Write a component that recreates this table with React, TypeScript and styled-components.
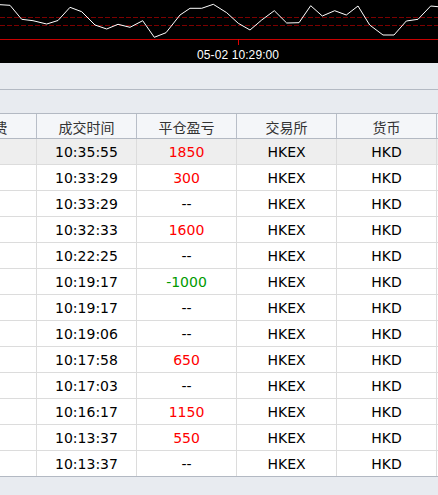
import React from "react";
import styled, { createGlobalStyle } from "styled-components";

const Global = createGlobalStyle`
  html, body { margin: 0; padding: 0; background: #e8ebf0; }
  body { width: 438px; height: 495px; overflow: hidden; font-family: "DejaVu Sans", Verdana, sans-serif; }
`;

const Page = styled.div`
  width: 438px;
  height: 495px;
  display: flex;
  flex-direction: column;
  overflow: hidden;
`;

const Chart = styled.div`
  background: #000;
  height: 63px;
  display: flex;
  flex-direction: column;
  flex: none;
`;

const ChartSvg = styled.svg`
  display: block;
  width: 438px;
  height: 45px;
`;

const AxisLabelRow = styled.div`
  height: 18px;
  display: flex;
  align-items: center;
  padding-left: 197px;
`;

const AxisLabel = styled.span`
  color: #fff;
  font-family: "Liberation Sans", Arial, sans-serif;
  font-size: 12px;
  letter-spacing: 0.1px;
  line-height: 1;
  margin-top: 1px;
`;

const ToolBar = styled.div<{ $h: number }>`
  height: ${(p) => p.$h}px;
  flex: none;
  background: #e8ebf0;
  border-bottom: 1px solid #b3b9c3;
`;

const TableViewport = styled.div`
  flex: none;
  overflow: hidden;
  background: #fff;
  border-bottom: 1px solid #b3b9c3;
`;

const TableInner = styled.div`
  margin-left: -63px;
  width: 700px;
`;

const COLS = "100px 100px 100px 100px 100px 200px";

const HeaderRow = styled.div`
  display: grid;
  grid-template-columns: ${COLS};
  height: 24px;
  background: #f4f6f9;
  border-bottom: 1px solid #b3b9c3;
`;

const HeadCell = styled.div`
  display: flex;
  align-items: center;
  justify-content: center;
  border-right: 1px solid #b8bec8;
  color: #333;
  font-family: "Noto Sans CJK SC", sans-serif;
  font-size: 14px;
  line-height: 1;
  padding-top: 1px;
`;

const Row = styled.div<{ $selected?: boolean }>`
  display: grid;
  grid-template-columns: ${COLS};
  height: 25px;
  background: ${(p) => (p.$selected ? "#eeeeee" : "#ffffff")};
  border-bottom: 1px solid #dcdcdc;
  &:last-child { border-bottom: none; }
`;

const Cell = styled.div<{ $tone?: "red" | "green" | "black" }>`
  display: flex;
  align-items: center;
  justify-content: center;
  border-right: 1px solid #dcdcdc;
  font-family: "DejaVu Sans", Verdana, sans-serif;
  font-size: 14px;
  line-height: 1;
  padding-top: 1px;
  color: ${(p) => (p.$tone === "red" ? "#ff0000" : p.$tone === "green" ? "#009a00" : "#000")};
`;

const Footer = styled.div`
  flex: 1;
  background: #e8ebf0;
`;

const linePts: [number, number][] = [
  [0, 4.7], [10, 5.3], [21.7, 19.3], [33, 20.7], [46.7, 24], [58, 20.5], [70, 7.3], [81.7, 11.7],
  [95, 25], [106.7, 29], [118, 24.3], [130, 27.3], [142.7, 20.7], [154.3, 37.3], [166, 32.7],
  [180, 15], [190, 8.3], [201.7, 8.3], [213.3, 4.3], [226.7, 12.7], [238.3, 23.3], [250, 30],
  [261.7, 20], [274.3, 10.7], [286.7, 23], [299, 22.7], [310.7, 5.7], [322.3, 16], [334.7, 10.7],
  [346.3, 15], [358, 6], [369.7, 25], [383, 35], [394, 35], [406.3, 21], [418, 19.3], [430.7, 6], [438, 6.7],
];

type Tone = "red" | "green" | "black";
const rows: { time: string; pnl: string; tone: Tone }[] = [
  { time: "10:35:55", pnl: "1850", tone: "red" },
  { time: "10:33:29", pnl: "300", tone: "red" },
  { time: "10:33:29", pnl: "--", tone: "black" },
  { time: "10:32:33", pnl: "1600", tone: "red" },
  { time: "10:22:25", pnl: "--", tone: "black" },
  { time: "10:19:17", pnl: "-1000", tone: "green" },
  { time: "10:19:17", pnl: "--", tone: "black" },
  { time: "10:19:06", pnl: "--", tone: "black" },
  { time: "10:17:58", pnl: "650", tone: "red" },
  { time: "10:17:03", pnl: "--", tone: "black" },
  { time: "10:16:17", pnl: "1150", tone: "red" },
  { time: "10:13:37", pnl: "550", tone: "red" },
  { time: "10:13:37", pnl: "--", tone: "black" },
];

export default function App() {
  return (
    <Page>
      <Global />
      <Chart>
        <ChartSvg viewBox="0 0 438 45">
          <line x1="0" y1="17.5" x2="438" y2="17.5" stroke="#7d0000" strokeWidth="1" strokeDasharray="5 2" />
          <line x1="0" y1="25.5" x2="438" y2="25.5" stroke="#7d0000" strokeWidth="1" strokeDasharray="5 2" />
          <polyline
            points={linePts.map(([x, y]) => `${x},${y}`).join(" ")}
            fill="none"
            stroke="#ffffff"
            strokeWidth="1"
          />
          <line x1="0" y1="39.5" x2="438" y2="39.5" stroke="#c80000" strokeWidth="1.2" />
          <line x1="238.5" y1="39" x2="238.5" y2="45" stroke="#e00000" strokeWidth="1" />
        </ChartSvg>
        <AxisLabelRow>
          <AxisLabel>05-02 10:29:00</AxisLabel>
        </AxisLabelRow>
      </Chart>
      <ToolBar $h={26} />
      <ToolBar $h={23} />
      <TableViewport>
        <TableInner>
          <HeaderRow>
            <HeadCell>手续费</HeadCell>
            <HeadCell>成交时间</HeadCell>
            <HeadCell>平仓盈亏</HeadCell>
            <HeadCell>交易所</HeadCell>
            <HeadCell>货币</HeadCell>
            <HeadCell />
          </HeaderRow>
          {rows.map((r, i) => (
            <Row key={i} $selected={i === 0}>
              <Cell />
              <Cell>{r.time}</Cell>
              <Cell $tone={r.tone}>{r.pnl}</Cell>
              <Cell>HKEX</Cell>
              <Cell>HKD</Cell>
              <Cell />
            </Row>
          ))}
        </TableInner>
      </TableViewport>
      <Footer />
    </Page>
  );
}
